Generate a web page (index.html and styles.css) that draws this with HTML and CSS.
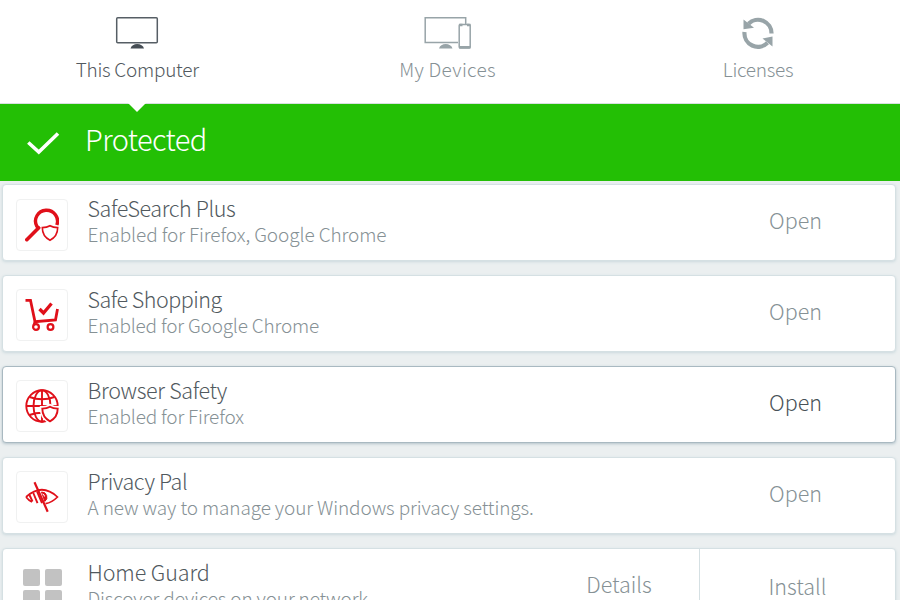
FILE: index.html
```html
<!DOCTYPE html>
<html lang="en">
<head>
<meta charset="utf-8">
<title>Protection</title>
<link rel="stylesheet" href="styles.css">
</head>
<body>
<nav class="tabs">
  <a class="tab active">
    <svg class="tab-icon" width="48" height="36" viewBox="0 0 48 36" fill="none"><rect x="3.7" y="2.7" width="40.6" height="25" rx="1" stroke="#565e65" stroke-width="1.5"/><path d="M17.5 33.6c.8-3 3.5-4.6 6.700-4.600s6 1.600 6.800 4.600z" fill="#454d54"/></svg>
    <span class="tab-label l-computer">This Computer</span>
  </a>
  <a class="tab">
    <svg class="tab-icon" width="48" height="36" viewBox="0 0 48 36" fill="none" stroke="#98a4a8"><path d="M34 27.600H1.200V2.700H41.700V9" stroke-width="1.500"/><path d="M15 33.600c.8-3 3.500-4.600 6.700-4.600s6 1.600 6.800 4.600z" fill="#98a4a8" stroke="none"/><rect x="35.200" y="9.500" width="11" height="23.500" rx="1" stroke-width="1.500"/><path d="M35 10h3.500M43 10h3.500M35 32.300h11.500" stroke-width="2.400"/></svg>
    <span class="tab-label l-devices">My Devices</span>
  </a>
  <a class="tab">
    <svg class="tab-icon" width="48" height="36" viewBox="0 0 48 36" fill="none" stroke="#98a4a8" stroke-width="4.200"><path d="M14.500 8.700A13.500 13.500 0 0 1 37.500 18.500"/><path d="M33.500 27.800A13.500 13.500 0 0 1 10.500 17"/><path d="M9.500 4.600V14.300L20 12.800zM38.500 31.500V21.500L28.500 23.400z" fill="#98a4a8" stroke="none"/></svg>
    <span class="tab-label l-licenses">Licenses</span>
  </a>
</nav>
<header class="status">
  <svg width="34" height="24" viewBox="0 0 34 24" fill="none"><path d="M2.300 11.500L12.800 21L32 2.500" stroke="#fff" stroke-width="3.600"/></svg>
  <h1>Protected</h1>
</header>
<main class="list">
  <section class="card">
    <div class="tile"><svg width="34" height="34" viewBox="0 0 34 34" fill="none" stroke="#e0101a"><path d="M31.800 17A11 10.900 0 1 0 11.800 18.200L14.500 21" stroke-width="3.400"/><path d="M13.500 20L1.800 31.700" stroke-width="3.600" stroke-linecap="round"/><path d="M25 17.700c2.300 1.400 4.800 1.900 7.700 1.900 0 6-2.700 10.200-7.700 12.700-5-2.500-7.700-6.700-7.700-12.700 2.900 0 5.400-.5 7.700-1.900z" fill="#fff" stroke-width="1.600"/></svg></div>
    <div class="text"><h2 class="t1">SafeSearch Plus</h2><p class="d1">Enabled for Firefox, Google Chrome</p></div>
    <a class="action">Open</a>
  </section>
  <section class="card">
    <div class="tile"><svg width="34" height="34" viewBox="0 0 34 34" fill="none" stroke="#e0101a"><path d="M.5 2.300H5.500L10 23.700L30.500 22L32.500 11" stroke-width="2.800"/><path d="M10 23L8.500 27" stroke-width="2"/><circle cx="11" cy="29" r="2.900" stroke-width="2.200"/><circle cx="25.500" cy="29" r="2.900" stroke-width="2.200"/><path d="M14.500 11L18.500 15L26.500 5.500" stroke-width="3.300"/></svg></div>
    <div class="text"><h2 class="t2">Safe Shopping</h2><p class="d2">Enabled for Google Chrome</p></div>
    <a class="action">Open</a>
  </section>
  <section class="card selected">
    <div class="tile"><svg width="34" height="34" viewBox="0 0 34 34" fill="none" stroke="#e0101a" stroke-width="1.900"><circle cx="17" cy="17" r="15.700"/><ellipse cx="17" cy="17" rx="8.500" ry="15.700"/><path d="M17 1V33M1 17H33M4.500 8Q17 12.500 29.500 8M4.500 26Q17 21.500 29.500 26"/><path d="M25 17.700c2.300 1.400 4.800 1.900 7.700 1.900 0 6-2.700 10.200-7.700 12.700-5-2.500-7.700-6.700-7.700-12.700 2.900 0 5.400-.5 7.700-1.900z" fill="#fff" stroke="#fff" stroke-width="5"/><path d="M25 17.700c2.300 1.400 4.800 1.900 7.700 1.900 0 6-2.700 10.200-7.700 12.700-5-2.500-7.700-6.700-7.700-12.700 2.900 0 5.400-.5 7.700-1.900z" fill="#fff"/></svg></div>
    <div class="text"><h2 class="t3">Browser Safety</h2><p class="d3">Enabled for Firefox</p></div>
    <a class="action">Open</a>
  </section>
  <section class="card">
    <div class="tile"><svg width="34" height="34" viewBox="0 0 34 34" fill="none" stroke="#e0101a" stroke-width="1.700"><path d="M1 17Q17 2.500 32.500 17Q27 22.500 20.500 23.700M1 17Q3.500 20.300 7 22"/><path d="M16.500 12a5.200 5.200 0 0 1 3.300 9.400z" fill="#e0101a" stroke-width="1"/><path d="M4.500 15L7.500 21.500M8.300 13L12.500 23.200M12 11.500L17 23.200" stroke-width="1.900"/><path d="M9.500 2.300L22.700 31.700" stroke-width="2.200"/><path d="M17.500 14q2 .5 2 2.500" stroke="#fff" stroke-width="1"/></svg></div>
    <div class="text"><h2 class="t4">Privacy Pal</h2><p class="d4">A new way to manage your Windows privacy settings.</p></div>
    <a class="action">Open</a>
  </section>
  <section class="card split">
    <div class="squares"><i></i><i></i><i></i><i></i></div>
    <div class="text"><h2 class="t5">Home Guard</h2><p class="d5">Discover devices on your network.</p></div>
    <a class="details">Details</a>
    <a class="action install">Install</a>
  </section>
</main>
</body>
</html>
```
FILE: styles.css
```css
* { box-sizing: border-box; }
body {
  margin: 0;
  height: 600px;
  overflow: hidden;
  background: #ebeff0;
  font-family: "Noto Sans CJK JP", "Noto Sans", sans-serif;
  font-weight: 300;
  color: #869195;
}
h1, h2, p { margin: 0; font-weight: 300; white-space: nowrap; }
svg { display: block; }
.tabs {
  display: grid;
  grid-template-columns: 274.5px 346px 275px;
  height: 104px;
  padding-top: 15px;
  background: #fff;
  border-bottom: 1px solid #d8e0e0;
}
.tab {
  position: relative;
  display: flex;
  flex-direction: column;
  align-items: center;
}
.tab-label { margin-top: 3px; font-size: 19px; line-height: 30px; white-space: nowrap; }
.l-computer { letter-spacing: -0.27px; }
.l-devices { letter-spacing: 0.3px; }
.l-licenses { letter-spacing: -0.3px; }
.active { color: #51595e; }
.active::after {
  content: "";
  position: absolute;
  top: 88px;
  border: 9px solid transparent;
  border-top-color: #fff;
  border-bottom: 0;
}
.status {
  display: flex;
  align-items: center;
  height: 77.4px;
  padding-left: 26px;
  background: #23bf05;
  color: #fff;
}
.status h1 { margin: -9px 0 0 25px; font-size: 29px; line-height: 40px; letter-spacing: -0.6px; }
.list { display: flex; flex-direction: column; gap: 13.8px; padding: 3px 4px 0 2px; }
.card {
  display: flex;
  flex: none;
  height: 77px;
  padding-left: 13px;
  background: #fff;
  border: 1.5px solid #d5e0e3;
  border-radius: 4px;
  box-shadow: 0 1px 3px #cbd9dd;
}
.selected { border-color: #a9b9c1; box-shadow: 0 1px 3px #b3c3ca; }
.tile {
  display: grid;
  place-items: center;
  width: 52px;
  height: 52px;
  margin-top: 13.3px;
  border: 1px solid #f0f1f1;
  border-radius: 4px;
}
.text { flex: 1; margin: 8px 0 0 19.5px; }
.text h2 { font-size: 21.5px; line-height: 30px; color: #51595e; }
.text p { margin-top: -1px; font-size: 19px; line-height: 23px; }
.t1 { letter-spacing: -0.4px; }
.t2 { letter-spacing: -0.48px; }
.t3 { letter-spacing: -0.33px; }
.t4 { letter-spacing: -0.37px; }
.t5 { letter-spacing: -0.1px; }
.d1 { letter-spacing: -0.1px; }
.d2 { letter-spacing: -0.19px; }
.d3 { letter-spacing: -0.18px; }
.d4 { letter-spacing: -0.12px; }
.d5 { letter-spacing: -0.15px; }
.action { width: 199px; font-size: 21.5px; line-height: 70px; text-align: center; }
.selected .action { color: #485157; }
.squares {
  display: grid;
  grid-template-columns: 17px 17px;
  grid-auto-rows: 17px;
  gap: 4.5px;
  width: 52px;
  padding: 20px 0 0 7px;
}
.squares i { background: #c2c2c2; border-radius: 2px; }
.details { width: 160px; font-size: 21.5px; line-height: 70px; text-align: center; }
.split .install { width: 196px; border-left: 1.5px solid #d5e0e3; line-height: 73px; }
```
